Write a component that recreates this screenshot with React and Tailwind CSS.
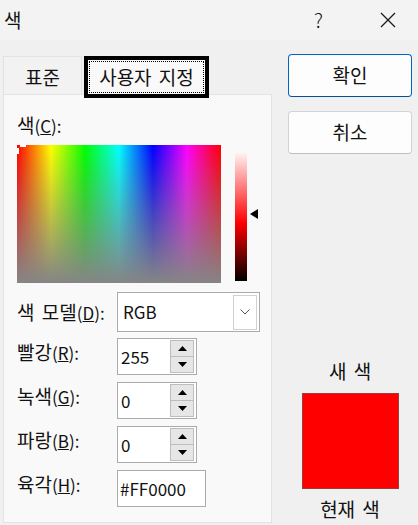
// App.jsx — Windows "색" (color) dialog, custom tab.
function K({ children }) {
  return <span className="text-[19px] [word-spacing:3px]">{children}</span>;
}

function Triangle({ down }) {
  return (
    <svg width="9" height="5" viewBox="0 0 9 5">
      <polygon points={down ? '0,0 9,0 4.5,5' : '0,5 9,5 4.5,0'} fill="#000" />
    </svg>
  );
}

function Spin({ value }) {
  return (
    <div className="flex h-[37px] w-[80px] items-center border border-[#ababab] bg-white">
      <span className="flex-1 pl-[3px] leading-[24px]">{value}</span>
      <div className="mr-[2px] flex h-[33px] w-[24px] flex-col">
        <div className="flex flex-1 items-center justify-center border border-[#bdbdbd] bg-[#e6e6e6]">
          <Triangle />
        </div>
        <div className="-mt-px flex flex-1 items-center justify-center border border-[#bdbdbd] bg-[#e6e6e6]">
          <Triangle down />
        </div>
      </div>
    </div>
  );
}

function Row({ label, letter, children, top = 'mt-[7px]', shift = 'pb-[8px]' }) {
  return (
    <div className={`flex items-center ${top}`}>
      <span className={`w-[100px] leading-[24px] ${shift}`}>
        <K>{label}</K>(<u>{letter}</u>):
      </span>
      {children}
    </div>
  );
}

export default function App() {
  return (
    <div className="h-[525px] w-[418px] overflow-hidden bg-[#f0f0f0] text-[17px] text-[#111] [font-family:'Noto_Sans_CJK_KR','Noto_Sans',sans-serif]">
      <div className="flex h-[40px] items-center bg-[#f3f3f3] pl-[4px]">
        <span className="text-[19px] leading-[24px]">색</span>
        <span className="ml-auto text-[20px] font-light leading-[24px]">?</span>
        <svg className="ml-[57px] mr-[22px]" width="16" height="16" viewBox="0 0 16 16">
          <path d="M1 1 L15 15 M15 1 L1 15" stroke="#1b1b1b" strokeWidth="1.3" />
        </svg>
      </div>

      <div className="flex pt-[14px]">
        <div className="ml-[3px] w-[269px] pt-[2px]">
          <div className="flex h-[38px] items-start">
            <div className="flex h-[38px] w-[79px] items-center justify-center border border-b-0 border-[#e2e2e2] bg-[#f2f2f2] pt-[2px] leading-[24px]">
              <K>표준</K>
            </div>
            <div className="relative z-10 ml-[2px] h-[42px] w-[125px] border-4 border-black bg-[#f9f9f9]">
              <div className="m-[1px] flex h-[32px] items-center justify-center border border-dotted border-black leading-[24px]">
                <K>사용자 지정</K>
              </div>
            </div>
          </div>

          <div className="h-[429px] border border-[#e3e3e3] bg-[#f9f9f9] pl-[13px] pt-[18px]">
            <div className="leading-[24px]">
              <K>색</K>(<u>C</u>):
            </div>
            <div className="mt-[7px] flex items-start">
              <div className="relative h-[138px] w-[204px] bg-[linear-gradient(to_right,#f00,#ff0,#0f0,#0ff,#00f,#f0f,#f00)]">
                <div className="h-full w-full bg-linear-to-b from-[#80808000] to-[#858585]" />
                <div className="absolute left-[3px] top-0 h-[2px] w-[6px] bg-white" />
                <div className="absolute left-0 top-[3px] h-[6px] w-[2px] bg-white" />
              </div>
              <div className="ml-[14px] mt-[7px] h-[129px] w-[12px] bg-[linear-gradient(to_bottom,#fff6f6,#ff0000_55%,#000)]" />
              <svg className="ml-[3px] mt-[64px]" width="8" height="10" viewBox="0 0 8 10">
                <polygon points="8,0 8,10 0,5" fill="#000" />
              </svg>
            </div>

            <Row label="색 모델" letter="D" top="mt-[9px]" shift="">
              <div className="flex h-[40px] w-[143px] items-center border border-[#ababab] bg-white">
                <span className="flex-1 pl-[5px] leading-[24px]">RGB</span>
                <div className="mr-[2px] flex h-[35px] w-[24px] items-center justify-center border border-[#d0d0d0] bg-white">
                  <svg width="10" height="6" viewBox="0 0 10 6">
                    <path d="M0.5 0.5 L5 5 L9.5 0.5" fill="none" stroke="#555" strokeWidth="1" />
                  </svg>
                </div>
              </div>
            </Row>
            <Row label="빨강" letter="R" top="mt-[6px]">
              <Spin value="255" />
            </Row>
            <Row label="녹색" letter="G">
              <Spin value="0" />
            </Row>
            <Row label="파랑" letter="B">
              <Spin value="0" />
            </Row>
            <Row label="육각" letter="H">
              <div className="flex h-[37px] w-[89px] items-center border border-[#ababab] bg-white pl-[2px] leading-[24px]">
                #FF0000
              </div>
            </Row>
          </div>
        </div>

        <div className="ml-[16px] flex w-[124px] flex-col items-center">
          <button className="h-[43px] w-full rounded-[4px] border border-[#0067c0] border-b-[#00509a] bg-[#fdfdfd] leading-[24px]">
            <K>확인</K>
          </button>
          <button className="mt-[14px] h-[43px] w-full rounded-[4px] border border-[#d3d3d3] border-b-[#bdbdbd] bg-[#fdfdfd] leading-[24px]">
            <K>취소</K>
          </button>
          <div className="mt-[205px] leading-[24px]">
            <K>새 색</K>
          </div>
          <div className="mt-[9px] h-[96px] w-[97px] border border-[#9c3c3c] bg-[#ff0000]" />
          <div className="mt-[8px] leading-[24px]">
            <K>현재 색</K>
          </div>
        </div>
      </div>
    </div>
  );
}
